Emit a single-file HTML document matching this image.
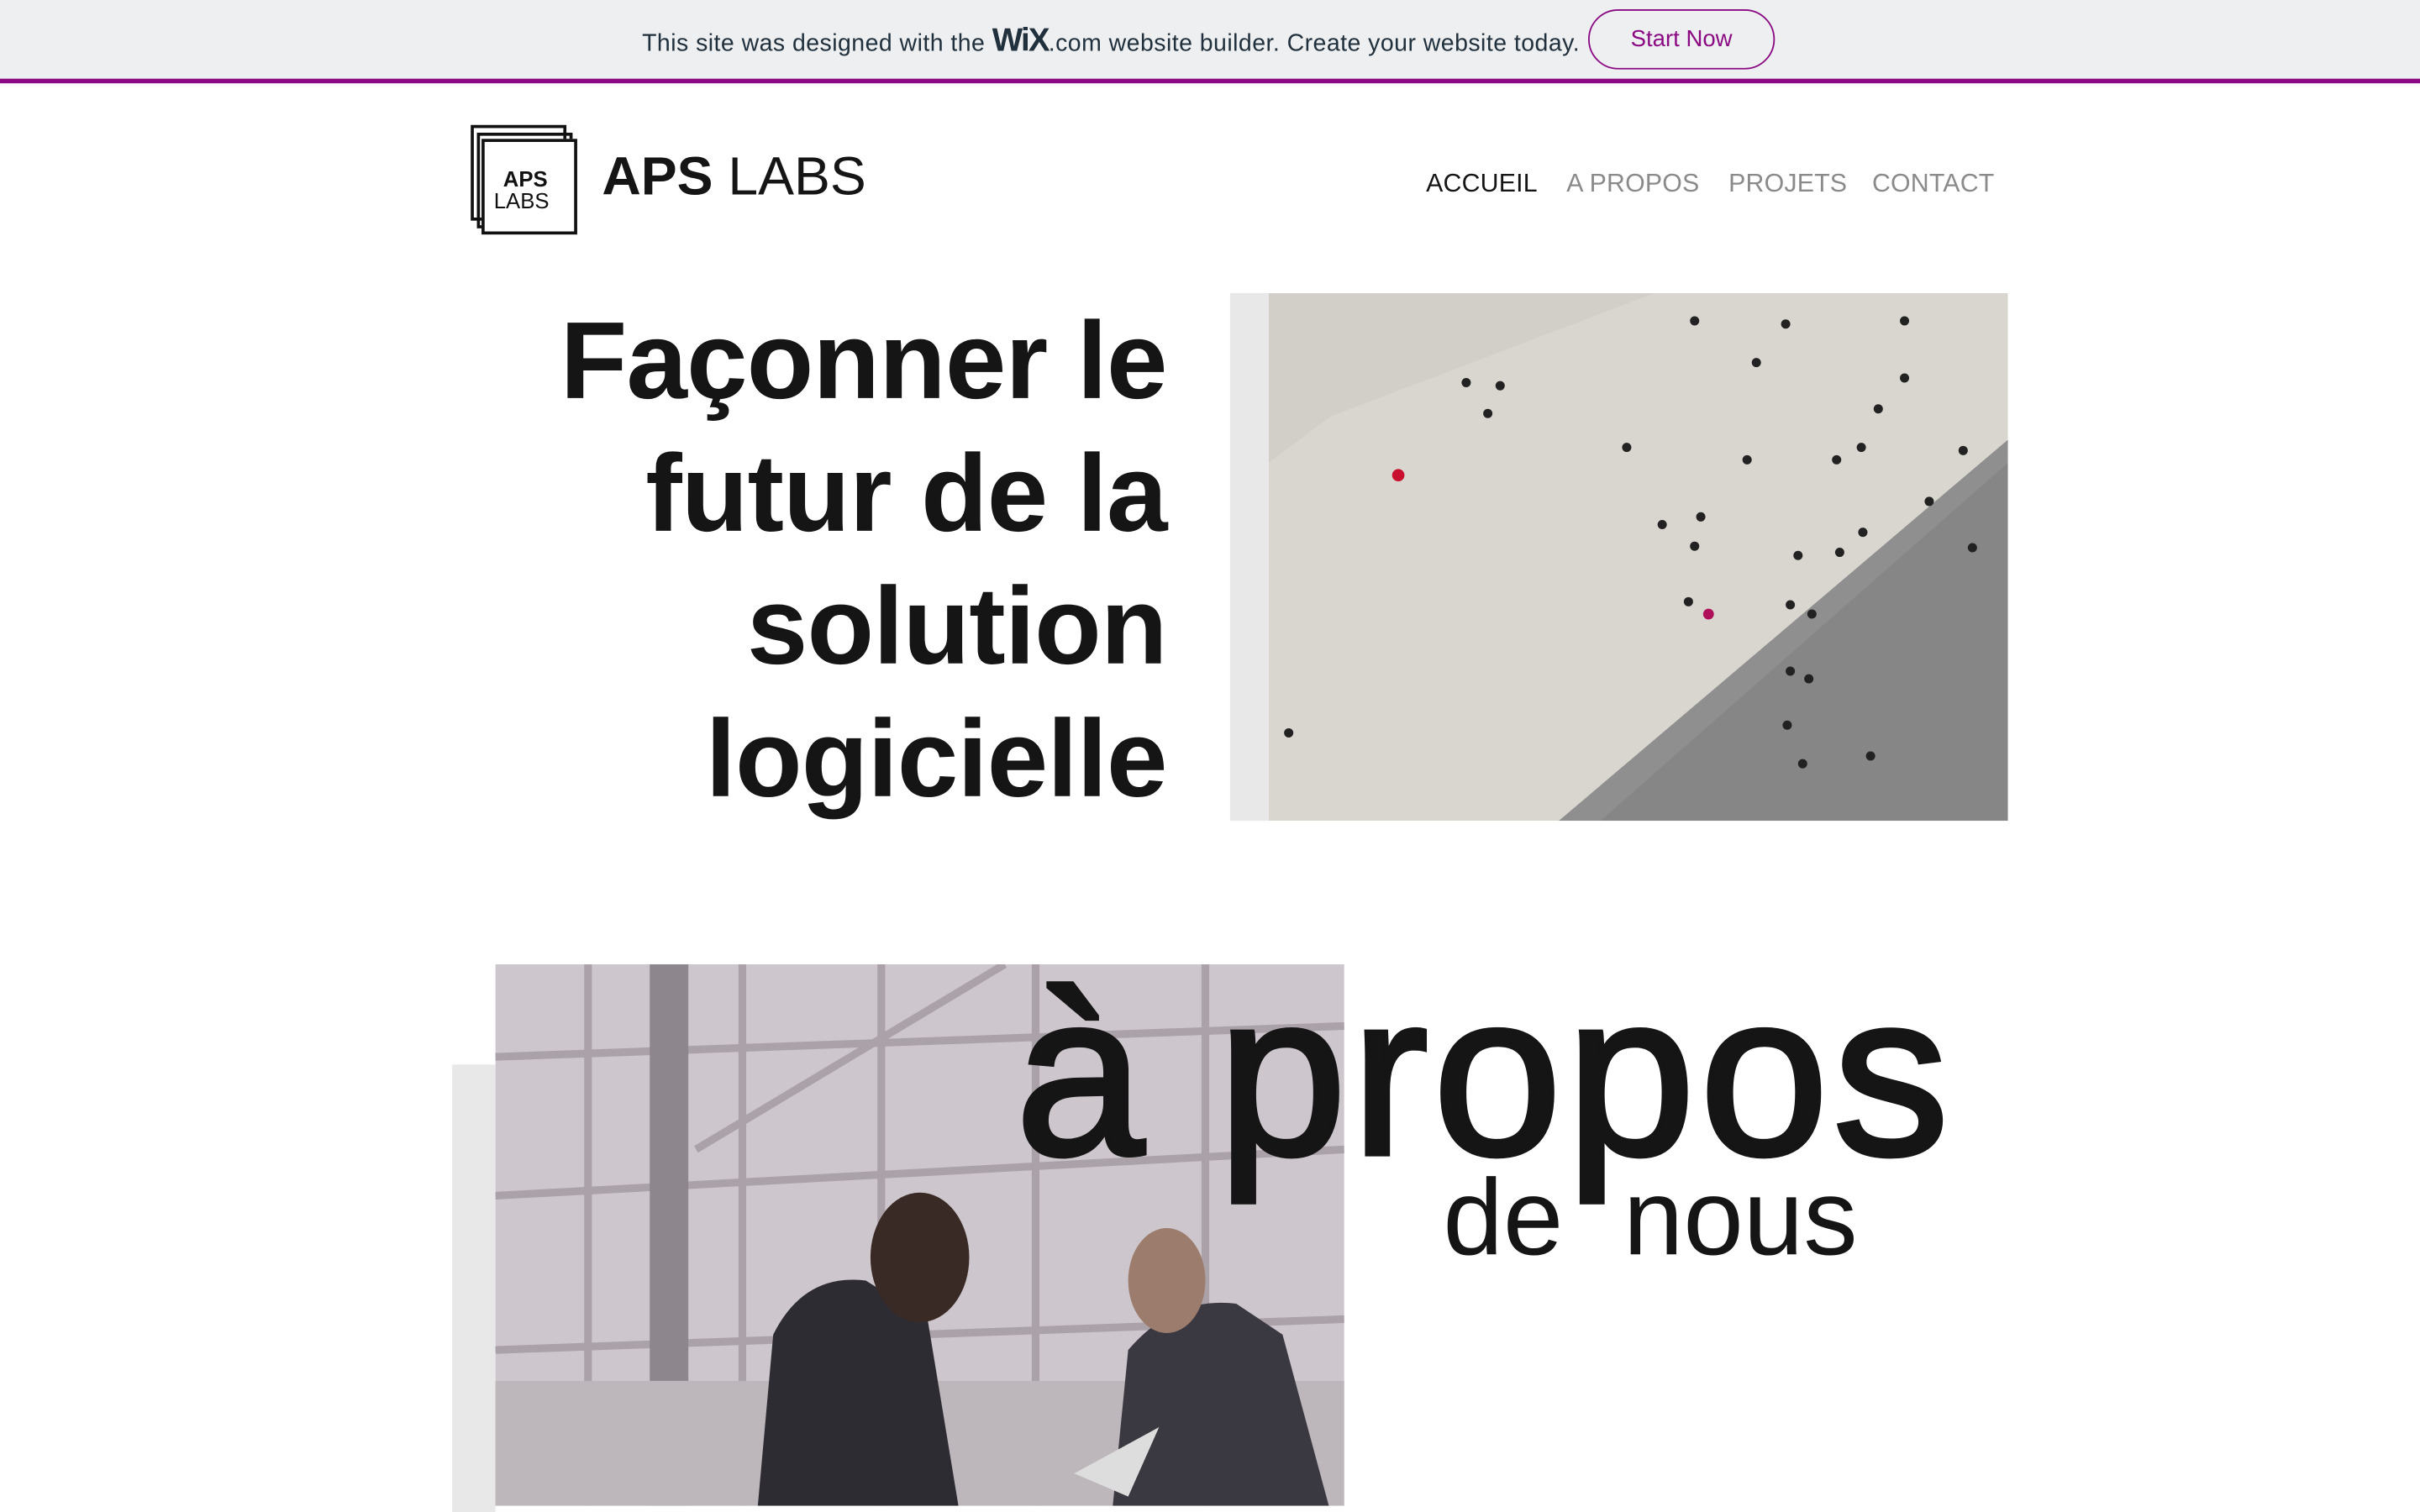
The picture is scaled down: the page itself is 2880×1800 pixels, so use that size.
<!DOCTYPE html>
<html><head><meta charset="utf-8"><style>
html,body{margin:0;padding:0;width:2880px;height:1800px;overflow:hidden;background:#fff}
#w{position:absolute;left:0;top:0;width:1568px;height:980px;transform:scale(1.836735);transform-origin:0 0;font-family:"Liberation Sans",sans-serif}
.a{position:absolute}
#ban{left:0;top:0;width:1568px;height:51px;background:#eeeff1;border-bottom:3px solid #8b0a84}
.nav{top:110px;font-size:16.5px;color:#8a8a8a;letter-spacing:0.1px}
.h{right:812px;font-size:71px;font-weight:bold;color:#151515;text-align:right;white-space:nowrap;letter-spacing:-0.5px}
</style></head><body><div id="w">
<div id="ban" class="a"></div>
<div class="a" style="left:416px;top:15px;font-size:15.5px;color:#20303c;white-space:nowrap;letter-spacing:0.25px">This site was designed with the <b style="font-size:21px;letter-spacing:-1px">WiX</b>.com website builder. Create your website today.</div>
<div class="a" style="left:1029px;top:6px;width:119px;height:37px;border:1.5px solid #8b0a84;border-radius:20px;color:#8b0a84;font-size:15px;text-align:center;line-height:38px">Start Now</div>

<div class="a" style="left:305px;top:81px;width:58px;height:58px;border:2px solid #111"></div>
<div class="a" style="left:309px;top:86px;width:58px;height:58px;border:2px solid #111"></div>
<div class="a" style="left:312px;top:90px;width:58px;height:58px;border:2px solid #111;background:#fff"></div>
<div class="a" style="left:326px;top:108px;font-size:14px;font-weight:bold;color:#111">APS</div>
<div class="a" style="left:320px;top:122px;font-size:14px;color:#111">LABS</div>
<div class="a" style="left:390px;top:95px;font-size:35px;color:#151515;white-space:nowrap"><b>APS</b> LABS</div>

<div class="a nav" style="left:924px;color:#151515">ACCUEIL</div>
<div class="a nav" style="left:1015px">A PROPOS</div>
<div class="a nav" style="left:1120px">PROJETS</div>
<div class="a nav" style="left:1213px">CONTACT</div>

<div class="a h" style="top:194px">Façonner le</div>
<div class="a h" style="top:280px">futur de la</div>
<div class="a h" style="top:366px">solution</div>
<div class="a h" style="top:452px">logicielle</div>

<div class="a" style="left:797px;top:190px;width:25px;height:342px;background:#e8e8e8"></div>
<svg class="a" style="left:822px;top:190px" width="479" height="342" viewBox="0 0 479 342">
<rect width="479" height="342" fill="#d9d6cf"/>
<polygon points="0,0 250,0 40,80 0,110" fill="#d2cfc8"/>
<polygon points="479,95 479,342 188,342" fill="#8f8f8f"/>
<polygon points="479,110 479,342 215,342" fill="#7d7d7d" opacity="0.5"/>
<g fill="#222">
<circle cx="276" cy="18" r="3"/><circle cx="335" cy="20" r="3"/><circle cx="316" cy="45" r="3"/><circle cx="412" cy="18" r="3"/>
<circle cx="128" cy="58" r="3"/><circle cx="150" cy="60" r="3"/><circle cx="142" cy="78" r="3"/><circle cx="232" cy="100" r="3"/>
<circle cx="310" cy="108" r="3"/><circle cx="368" cy="108" r="3"/><circle cx="384" cy="100" r="3"/><circle cx="412" cy="55" r="3"/>
<circle cx="395" cy="75" r="3"/><circle cx="428" cy="135" r="3"/><circle cx="450" cy="102" r="3"/><circle cx="255" cy="150" r="3"/>
<circle cx="280" cy="145" r="3"/><circle cx="276" cy="164" r="3"/><circle cx="343" cy="170" r="3"/><circle cx="370" cy="168" r="3"/>
<circle cx="385" cy="155" r="3"/><circle cx="272" cy="200" r="3"/><circle cx="338" cy="202" r="3"/><circle cx="352" cy="208" r="3"/>
<circle cx="338" cy="245" r="3"/><circle cx="350" cy="250" r="3"/><circle cx="336" cy="280" r="3"/><circle cx="346" cy="305" r="3"/>
<circle cx="390" cy="300" r="3"/><circle cx="13" cy="285" r="3"/><circle cx="456" cy="165" r="3"/></g>
<circle cx="84" cy="118" r="4" fill="#c8102e"/><circle cx="285" cy="208" r="3.5" fill="#b0105a"/>
</svg>

<div class="a" style="left:293px;top:690px;width:28px;height:290px;background:#e8e8e8"></div>
<svg class="a" style="left:321px;top:625px" width="550" height="351" viewBox="0 0 550 351">
<rect width="550" height="351" fill="#cdc6cc"/>
<g stroke="#aaa2a8" stroke-width="5" fill="none">
<line x1="0" y1="60" x2="550" y2="40"/><line x1="0" y1="150" x2="550" y2="120"/><line x1="0" y1="250" x2="550" y2="230"/>
<line x1="60" y1="0" x2="60" y2="351"/><line x1="160" y1="0" x2="160" y2="351"/><line x1="250" y1="0" x2="250" y2="351"/><line x1="350" y1="0" x2="350" y2="351"/><line x1="460" y1="0" x2="460" y2="351"/>
<line x1="130" y1="120" x2="330" y2="0"/></g>
<rect x="100" y="0" width="25" height="351" fill="#8d868c"/>
<rect x="0" y="270" width="550" height="81" fill="#bdb6bb"/>
<path d="M170,351 L180,240 Q200,200 240,205 L280,230 L300,351 Z" fill="#2e2c33"/>
<ellipse cx="275" cy="190" rx="32" ry="42" fill="#3a2a26"/>
<path d="M400,351 L410,250 Q440,215 480,220 L510,240 L540,351 Z" fill="#3a3840"/>
<ellipse cx="435" cy="205" rx="25" ry="34" fill="#9c7c6c"/>
<path d="M375,330 L430,300 L410,345 Z" fill="#ddd"/>
</svg>

<div class="a" style="left:658px;top:610px;font-size:150px;color:#151515;white-space:nowrap;letter-spacing:3px;-webkit-text-stroke:3px #151515">à propos</div>
<div class="a" style="left:935px;top:749px;font-size:70px;color:#151515;white-space:nowrap">de&nbsp; nous</div>
</div></body></html>
